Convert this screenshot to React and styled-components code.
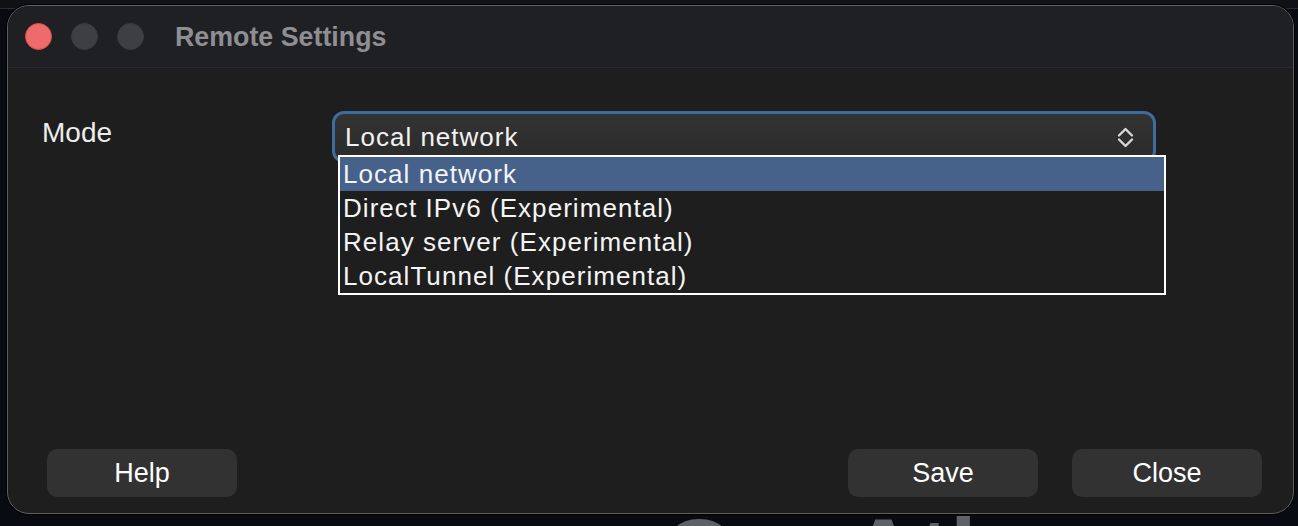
import React from 'react';
import styled, { createGlobalStyle } from 'styled-components';

const GlobalStyle = createGlobalStyle`
  html, body {
    margin: 0;
    padding: 0;
    background: #0a0d14;
    overflow: hidden;
  }
  * {
    box-sizing: border-box;
  }
`;

const Desktop = styled.div`
  position: relative;
  width: 1298px;
  height: 526px;
  overflow: hidden;
  background: #080b12;
  font-family: "Liberation Sans", Arial, sans-serif;
  display: flex;
  flex-direction: column;
`;

const MenuStrip = styled.div`
  height: 9px;
  background: #101114;
  border-bottom: 1px solid #2a2b2e;
`;

const BackdropTitle = styled.div`
  margin-top: auto;
  padding-left: 662px;
  height: 12px;
  overflow: hidden;
  font-size: 96px;
  font-weight: 700;
  line-height: 1;
  color: #5e6168;
  white-space: nowrap;
  & span {
    display: block;
    margin-top: -9px;
  }
`;

const Window = styled.div`
  position: absolute;
  left: 7px;
  top: 5px;
  width: 1287px;
  height: 509px;
  border-radius: 22px;
  border: 1px solid #5f5f62;
  box-shadow: 0 0 0 1px #000;
  background: #1e1e1e;
  overflow: hidden;
  display: flex;
  flex-direction: column;
`;

const TitleBar = styled.div`
  height: 62px;
  flex-shrink: 0;
  background: #1f2023;
  border-bottom: 1px solid #28292b;
  display: flex;
  align-items: center;
  padding-left: 17px;
`;

const Lights = styled.div`
  display: flex;
  gap: 19px;
  margin-right: 31px;
`;

const Light = styled.span`
  width: 27px;
  height: 27px;
  border-radius: 50%;
  background: ${p => (p.$red ? '#ee6a6b' : '#3e3f42')};
  border: 1px solid ${p => (p.$red ? '#d5504f' : '#3a3b3e')};
`;

const Title = styled.div`
  font-size: 26.8px;
  font-weight: 700;
  color: #8e8e93;
  margin-top: 1px;
`;

const Body = styled.div`
  flex: 1;
  display: flex;
  flex-direction: column;
  padding: 43px 31px 16px 34px;
`;

const Row = styled.div`
  display: flex;
  align-items: flex-start;
`;

const Label = styled.div`
  width: 290px;
  font-size: 28px;
  line-height: 32px;
  color: #ececec;
  padding-top: 6px;
`;

const ComboWrap = styled.div`
  position: relative;
  width: 824px;
`;

const Combo = styled.div`
  height: 52px;
  border: 3px solid #3b6d9e;
  border-radius: 12px;
  background: linear-gradient(#333333, #2b2b2b);
  display: flex;
  align-items: center;
  padding: 0 19px 0 10px;
  color: #f2f2f2;
  font-size: 26px;
  letter-spacing: 1px;
  line-height: 26px;
`;

const ComboText = styled.span`
  flex: 1;
`;

const Popup = styled.ul`
  position: absolute;
  left: 6px;
  top: 44px;
  width: 828px;
  margin: 0;
  padding: 0;
  list-style: none;
  background: #1e1e1e;
  border: 2px solid #ffffff;
`;

const Option = styled.li`
  height: 34px;
  line-height: 34px;
  padding-left: 3px;
  font-size: 26px;
  letter-spacing: 1.05px;
  color: #f4f4f4;
  background: ${p => (p.$active ? '#46618a' : 'transparent')};
  white-space: nowrap;
`;

const Footer = styled.div`
  margin-top: auto;
  display: flex;
  align-items: center;
  padding-left: 5px;
`;

const Button = styled.button`
  width: 190px;
  height: 48px;
  border: none;
  border-radius: 10px;
  background: #323232;
  color: #ffffff;
  font-family: "Liberation Sans", Arial, sans-serif;
  font-size: 27px;
  padding: 0;
  margin-left: ${p => p.$gap || 0}px;
`;

const Spacer = styled.div`
  flex: 1;
`;

const Chevrons = () => (
  <svg width="17" height="21" viewBox="0 0 17 21" fill="none" stroke="#d6d6d6" strokeWidth="2.4" strokeLinecap="round" strokeLinejoin="round">
    <polyline points="2,8.5 8.5,2 15,8.5" />
    <polyline points="2,12.5 8.5,19 15,12.5" />
  </svg>
);

const options = [
  'Local network',
  'Direct IPv6 (Experimental)',
  'Relay server (Experimental)',
  'LocalTunnel (Experimental)',
];

export default function App() {
  return (
    <Desktop>
      <GlobalStyle />
      <MenuStrip />
      <BackdropTitle>
        <span>OneAtlas</span>
      </BackdropTitle>

      <Window>
        <TitleBar>
          <Lights>
            <Light $red />
            <Light />
            <Light />
          </Lights>
          <Title>Remote Settings</Title>
        </TitleBar>

        <Body>
          <Row>
            <Label>Mode</Label>
            <ComboWrap>
              <Combo>
                <ComboText>Local network</ComboText>
                <Chevrons />
              </Combo>
              <Popup>
                {options.map((o, i) => (
                  <Option key={o} $active={i === 0}>{o}</Option>
                ))}
              </Popup>
            </ComboWrap>
          </Row>

          <Footer>
            <Button>Help</Button>
            <Spacer />
            <Button>Save</Button>
            <Button $gap={34}>Close</Button>
          </Footer>
        </Body>
      </Window>
    </Desktop>
  );
}
